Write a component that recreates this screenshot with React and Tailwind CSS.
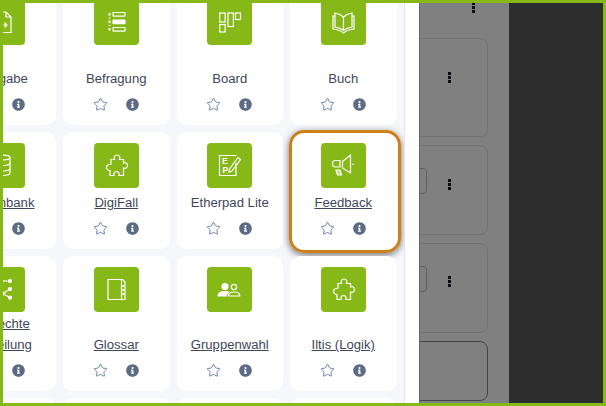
import { Star } from "lucide-react";

const FONT = "font-['Liberation_Sans',Arial,sans-serif]";

// icons are drawn on the 45x45 green tile
const icons = {
  abgabe: (
    <>
      <path d="M14 12H26L31 17V32.5H14Z" />
      <path d="M26 12V17H31" />
      <path d="M22 18V25H27M24.5 22.5L27 25L24.5 27.5" />
    </>
  ),
  befragung: (
    <>
      <rect x="19" y="12.5" width="12" height="3.6" rx="0.6" />
      <rect x="19" y="20" width="12" height="3.6" rx="0.6" fill="#fff" />
      <rect x="19" y="27.5" width="12" height="3.6" rx="0.6" />
      <path d="M15.5 13V15.5M15.5 17.5V18.5M15.5 20.5V23M15.5 25V26M15.5 28V30.5" strokeWidth="2" />
    </>
  ),
  board: (
    <>
      <rect x="12.7" y="13" width="5.4" height="9" />
      <rect x="12.7" y="24.5" width="5.4" height="7.5" />
      <rect x="21" y="13" width="5.4" height="13.5" />
      <rect x="28.5" y="13" width="5" height="6.5" />
    </>
  ),
  buch: (
    <>
      <path d="M22.5 17C20 14.5 16.5 13.5 14 13V27C17 27.5 20 28.5 22.5 30.5C25 28.5 28 27.5 31 27V13C28.5 13.5 25 14.5 22.5 17Z" />
      <path d="M22.5 17V30.5" />
      <path d="M14 16H12V29C16 29.5 20 30.5 22.5 33C25 30.5 29 29.5 33 29V16H31" />
    </>
  ),
  db: (
    <>
      <ellipse cx="22" cy="14.5" rx="8" ry="2.4" />
      <path d="M14 14.5V30C14 31.5 18 32.5 22 32.5C26 32.5 30 31.5 30 30V14.5" />
      <path d="M14 20C14 21.5 18 22.5 22 22.5C26 22.5 30 21.5 30 20" />
      <path d="M14 25.5C14 27 18 28 22 28C26 28 30 27 30 25.5" />
    </>
  ),
  puzzle: (
    <path d="M17 16.5H20.5C19.5 14 20.5 12 23 12C25.5 12 26.5 14 25.5 16.5H29.5V20C31.5 19 33.5 20 33.5 22.5C33.5 25 31.5 26 29.5 25V32.5H25C25.5 30 24.5 28.5 22.5 28.5C20.5 28.5 19.5 30 20 32.5H16V27.5C14 27.5 12.5 26 12.5 24.5C12.5 22.5 14 21.5 15.5 21.5L17 21Z" />
  ),
  etherpad: (
    <>
      <path d="M29 20V32.5H12.5V12.5H29.5" />
      <text x="15" y="20.5" fill="#fff" stroke="none" fontSize="8.5" fontWeight="700" fontFamily="Liberation Sans">E</text>
      <text x="15.5" y="30" fill="#fff" stroke="none" fontSize="8.5" fontWeight="700" fontFamily="Liberation Sans">P</text>
      <path d="M22.5 26L31 14.5L33.5 16.5L25 28L22 29Z" />
    </>
  ),
  feedback: (
    <>
      <path d="M21.5 18.5L29.5 12V30L21.5 25Z" />
      <path d="M19 17.5H14C12.5 17.5 11.5 19 11.5 20.5C11.5 22.5 12.5 24 14 24H19Z" />
      <path d="M15 27H19L20.5 32H16.5Z" fill="#fff" fillOpacity="0.5" />
      <path d="M32 20.5V22" />
    </>
  ),
  gerechte: (
    <>
      <path d="M21 14H27.5" />
      <circle cx="30" cy="14" r="1.5" fill="#fff" />
      <path d="M30 22L23 26.5L30 30.7" />
      <circle cx="23" cy="26.5" r="1.5" />
      <circle cx="30" cy="22" r="1.5" fill="#fff" />
      <circle cx="30" cy="30.7" r="1.5" fill="#fff" />
    </>
  ),
  glossar: (
    <>
      <path d="M14 12.5H28.5L31 15V32.5H14Z" />
      <path d="M27.5 13V32" />
      <path d="M29.3 18V20M29.3 22V24M29.3 26V28" strokeWidth="1.8" />
    </>
  ),
  gruppen: (
    <>
      <circle cx="18" cy="19.5" r="3" fill="#fff" />
      <path d="M11 29C11 26 13.5 24.5 18 24.5C19.5 24.5 20.5 24.7 21.5 25C20 26 19.5 27.5 19.5 29Z" fill="#fff" />
      <circle cx="27" cy="20" r="2.6" />
      <path d="M21.5 29C21.5 26.5 23.5 25 27 25C30.5 25 32.8 26.5 32.8 29Z" />
    </>
  ),
};

const rows = [
  [
    { name: "Abgabe", icon: "abgabe", tall: true, nudge: "pl-[5px]" },
    { name: "Befragung", icon: "befragung", tall: true },
    { name: "Board", icon: "board", tall: true },
    { name: "Buch", icon: "buch", tall: true },
  ],
  [
    { name: "Datenbank", icon: "db", link: true },
    { name: "DigiFall", icon: "puzzle", link: true },
    { name: "Etherpad Lite", icon: "etherpad" },
    { name: "Feedback", icon: "feedback", link: true, active: true },
  ],
  [
    { name: "Gerechte Verteilung", icon: "gerechte", link: true },
    { name: "Glossar", icon: "glossar", link: true },
    { name: "Gruppenwahl", icon: "gruppen", link: true },
    { name: "Iltis (Logik)", icon: "puzzle", link: true },
  ],
];

function InfoIcon() {
  return (
    <svg width="13" height="13" viewBox="0 0 512 512" fill="#5d6b85">
      <path d="M256 8C119 8 8 119 8 256s111 248 248 248 248-111 248-248S393 8 256 8zm0 110c23 0 42 19 42 42s-19 42-42 42-42-19-42-42 19-42 42-42zm56 254c0 7-5 12-12 12h-88c-7 0-12-5-12-12v-24c0-7 5-12 12-12h12v-64h-12c-7 0-12-5-12-12v-24c0-7 5-12 12-12h64c7 0 12 5 12 12v100h12c7 0 12 5 12 12z" />
    </svg>
  );
}

function Card({ item }) {
  return (
    <div className={`relative flex flex-col items-center rounded-[10px] bg-white pt-[11px] ${item.tall ? "min-h-[136px]" : ""}`}>
      <div className="flex h-[45px] w-[45px] shrink-0 items-center justify-center rounded-[4px] bg-[#86b817]">
        <svg width="45" height="45" viewBox="0 0 45 45" fill="none" stroke="#fff" strokeWidth="1.2">
          {icons[item.icon]}
        </svg>
      </div>
      <div className={`flex min-h-[25px] w-full flex-1 items-end justify-center pt-px text-center text-[13.125px] leading-[21px] text-[#3f4659] ${item.nudge || ""}`}>
        <span className={item.link ? "underline" : ""}>{item.name}</span>
      </div>
      <div className="flex h-[36px] w-full items-center justify-center gap-[18px] pb-[5px] pr-px">
        <Star size={15} strokeWidth={1.4} className="text-[#5d7196]" />
        <InfoIcon />
      </div>
      {item.active && (
        <div className="pointer-events-none absolute -top-[2px] -right-[4px] -bottom-[4px] -left-[1px] rounded-[15px] border-[3px] border-[#cf7f17] shadow-[0_2px_7px_rgba(0,0,0,0.55)]" />
      )}
    </div>
  );
}

function Kebab({ className }) {
  return (
    <div className={`flex w-[3px] flex-col gap-px ${className}`}>
      <div className="h-[3px] bg-[#0b0b12]" />
      <div className="h-[3px] bg-[#0b0b12]" />
      <div className="h-[3px] bg-[#0b0b12]" />
    </div>
  );
}

function BackCard({ height, input, kebabTop, strong }) {
  return (
    <div
      className={`flex w-[109px] shrink-0 -ml-[41px] rounded-[8px] border ${height} ${strong ? "border-[#444]" : "border-[#727272]"}`}
    >
      {input && <div className="mt-[22px] h-[26px] w-[47px] rounded-[4px] border border-[#5f5f5f]" />}
      {kebabTop && <Kebab className={`ml-auto mr-[36px] ${kebabTop}`} />}
    </div>
  );
}

export default function App() {
  return (
    <div className={`flex h-[406px] w-[606px] overflow-hidden border-[3px] border-[#86b817] bg-[#2d2d2d] ${FONT}`}>
      {/* activity chooser */}
      <div className="flex w-[416px] shrink-0 bg-white">
        <div className="w-[402px] shrink-0 overflow-hidden border-r border-[#e2e5f0] bg-[#f6f7fa]">
          <div className="-mt-[14px] -ml-[53.5px] grid w-[447px] grid-cols-[repeat(4,106.5px)] gap-[7px]">
            {rows.flat().map((item) => (
              <Card key={item.name} item={item} />
            ))}
            <div className="h-[60px] rounded-[10px] bg-white" />
            <div className="h-[60px] rounded-[10px] bg-white" />
            <div className="h-[60px] rounded-[10px] bg-white" />
            <div className="h-[60px] rounded-[10px] bg-white" />
          </div>
        </div>
      </div>

      {/* dimmed page behind the drawer */}
      <div className="flex w-[90px] shrink-0 flex-col overflow-hidden border-l border-[#666] bg-[#808080]">
        <div className="h-[35px] shrink-0">
          <Kebab className="ml-[52px] -mt-[1px]" />
        </div>
        <div className="flex flex-col gap-[8px]">
          <BackCard height="h-[99px]" kebabTop="mt-[33px]" />
          <BackCard height="h-[90px]" input kebabTop="mt-[33px]" />
          <BackCard height="h-[90px]" input kebabTop="mt-[32px]" />
          <BackCard height="h-[60px]" strong />
        </div>
      </div>

      <div className="flex-1 bg-[#2d2d2d]" />
    </div>
  );
}
